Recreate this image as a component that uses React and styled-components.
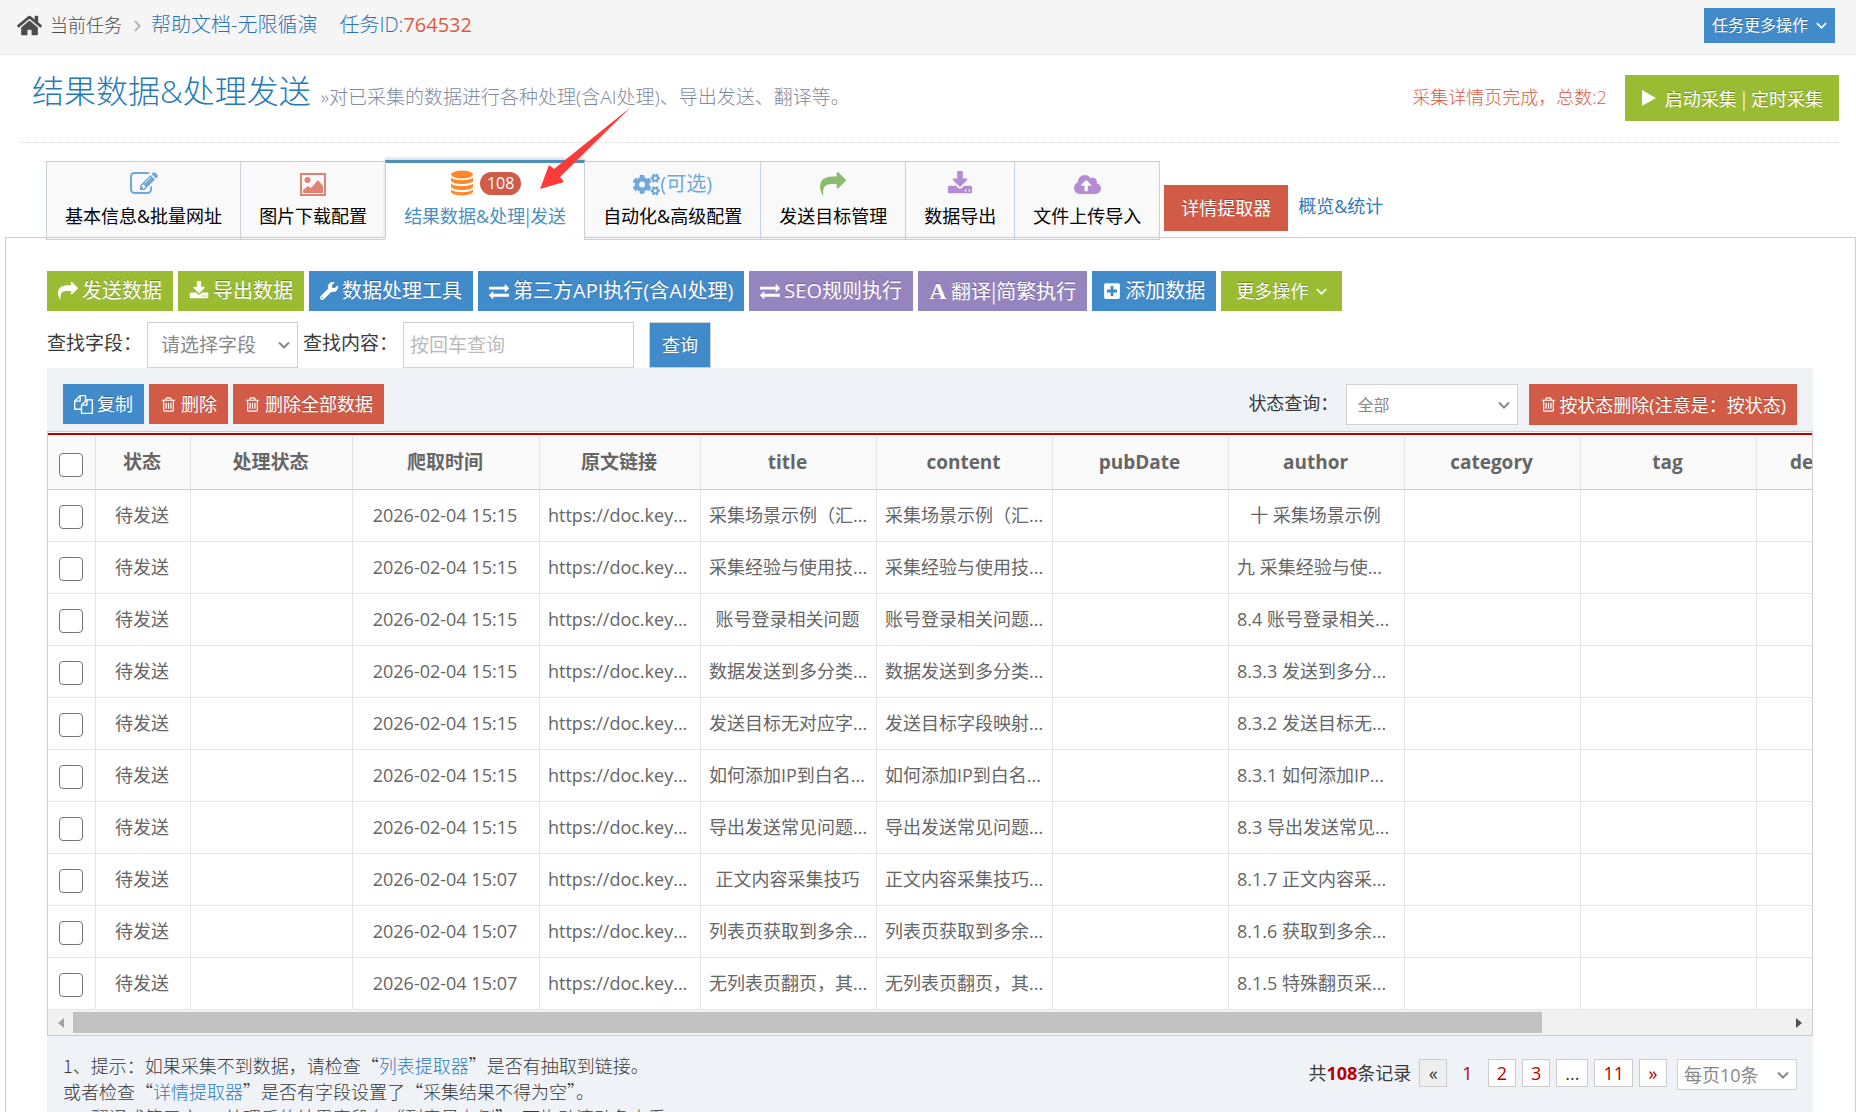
import React, { useState } from 'react';
import styled, { createGlobalStyle } from 'styled-components';
import { FaHome, FaWrench, FaPlusSquare, FaCogs, FaCloudUploadAlt } from 'react-icons/fa';

const GlobalStyle = createGlobalStyle`
    * {
        box-sizing: border-box;
    }

    body {
        margin: 0;
        background: #fff;
        color: #393939;
        font-family: "Open Sans", "Noto Sans CJK SC", sans-serif;
        font-size: 18px;
        line-height: 26px;
    }

    button, input, select {
        font-family: inherit;
        font-weight: inherit;
        margin: 0;
    }

    a {
        text-decoration: none;
    }
`;

const colors = {
    blue: "#428bca",
    green: "#9abc32",
    red: "#d15b47",
    purple: "#9585bf",
};

const Page = styled.div`
    position: relative;
    height: 100vh;
    overflow: hidden;
`;

/* ---------- icons ---------- */

const IconSvg = styled.svg`
    width: ${(p) => p.$size}px;
    height: ${(p) => p.$size}px;
    flex: none;
    fill: currentColor;
`;

const paths = {
    share: "M1792 640q0 26-19 45l-512 512q-19 19-45 19t-45-19-19-45v-256h-224q-98 0-175.5 6t-154 21.5-133 42.5-105.5 69.5-80 101-48.5 138.5-17.5 181q0 55 5 123 0 6 2.5 23.5t2.5 26.5q0 15-8.5 25t-23.5 10q-16 0-28-17-7-9-13-22t-13.5-30-10.5-24q-127-285-127-451 0-199 53-333 162-403 875-403h224v-256q0-26 19-45t45-19 45 19l512 512q19 19 19 45z",
    download: "M1344 1344q0-26-19-45t-45-19-45 19-19 45 19 45 45 19 45-19 19-45zm256 0q0-26-19-45t-45-19-45 19-19 45 19 45 45 19 45-19 19-45zm128-224v320q0 40-28 68t-68 28h-1472q-40 0-68-28t-28-68v-320q0-40 28-68t68-28h465l135 136q58 56 136 56t136-56l136-136h464q40 0 68 28t28 68zm-325-569q17 41-14 70l-448 448q-18 19-45 19t-45-19l-448-448q-31-29-14-70 17-39 59-39h256v-448q0-26 19-45t45-19h256q26 0 45 19t19 45v448h256q42 0 59 39z",
    exchange: "M1792 1184v192q0 13-9.5 22.5t-22.5 9.5h-1376v192q0 13-9.5 22.5t-22.5 9.5q-12 0-24-10l-319-320q-9-9-9-22 0-14 9-23l320-320q9-9 23-9 13 0 22.5 9.5t9.5 22.5v192h1376q13 0 22.5 9.5t9.5 22.5zm0-544q0 14-9 23l-320 320q-9 9-23 9-13 0-22.5-9.5t-9.5-22.5v-192h-1376q-13 0-22.5-9.5t-9.5-22.5v-192q0-13 9.5-22.5t22.5-9.5h1376v-192q0-14 9-23t23-9q12 0 24 10l319 319q9 9 9 23z",
    trash: "M704 736v576q0 14-9 23t-23 9h-64q-14 0-23-9t-9-23v-576q0-14 9-23t23-9h64q14 0 23 9t9 23zm256 0v576q0 14-9 23t-23 9h-64q-14 0-23-9t-9-23v-576q0-14 9-23t23-9h64q14 0 23 9t9 23zm256 0v576q0 14-9 23t-23 9h-64q-14 0-23-9t-9-23v-576q0-14 9-23t23-9h64q14 0 23 9t9 23zm128 724v-948h-896v948q0 22 7 40.5t14.5 27 10.5 8.5h832q3 0 10.5-8.5t14.5-27 7-40.5zm-672-1076h448l-48-117q-7-9-17-11h-317q-10 2-17 11zm928 32v64q0 14-9 23t-23 9h-96v948q0 83-47 143.5t-113 60.5h-832q-66 0-113-58.5t-47-141.5v-952h-96q-14 0-23-9t-9-23v-64q0-14 9-23t23-9h309l70-167q15-37 54-63t79-26h320q40 0 79 26t54 63l70 167h309q14 0 23 9t9 23z",
    files: "M1696 384q40 0 68 28t28 68v1216q0 40-28 68t-68 28h-960q-40 0-68-28t-28-68v-288h-544q-40 0-68-28t-28-68v-672q0-40 20-88t48-76l408-408q28-28 76-48t88-20h416q40 0 68 28t28 68v328q68-40 128-40h416zm-544 213l-299 299h299v-299zm-640-384l-299 299h299v-299zm196 647l316-316v-416h-384v416q0 40-28 68t-68 28h-416v640h512v-256q0-40 20-88t48-76zm956 804v-1152h-384v416q0 40-28 68t-68 28h-416v640h896z",
    edit: "M888 1184l116-116-152-152-116 116v56h96v96h56zm440-720q-16-16-33 1l-350 350q-17 17-1 33t33-1l350-350q17-17 1-33zm80 594v190q0 119-84.5 203.5t-203.5 84.5h-832q-119 0-203.5-84.5t-84.5-203.5v-832q0-119 84.5-203.5t203.5-84.5h832q63 0 117 25 15 7 18 23 3 17-9 29l-49 49q-14 14-32 8-23-6-45-6h-832q-66 0-113 47t-47 113v832q0 66 47 113t113 47h832q66 0 113-47t47-113v-126q0-13 9-22l64-64q15-15 35-7t20 29zm-96-738l288 288-672 672h-288v-288zm444 132l-92 92-288-288 92-92q28-28 68-28t68 28l152 152q28 28 28 68t-28 68z",
};

const Icon = ({ name, size }) => (
    <IconSvg $size={size} viewBox="0 0 1792 1792" aria-hidden="true">
        <path d={paths[name]} />
    </IconSvg>
);

const ImageIcon = () => (
    <IconSvg $size={26} viewBox="0 0 26 26" aria-hidden="true">
        <path fillRule="evenodd" d="M0 2h26v23H0zM2 4v19h22V4z" />
        <circle cx="7.5" cy="9" r="3" />
        <path d="M3 22v-3l5-4 3 2 7-8 5 6v7z" />
    </IconSvg>
);

const DatabaseIcon = () => (
    <IconSvg $size={26} viewBox="0 0 26 26" aria-hidden="true">
        <ellipse cx="13" cy="4.500" rx="11" ry="4" />
        <path d="M2 7.500c3 3.500 19 3.500 22 0v3.500c-2 4-20 4-22 0z" />
        <path d="M2 13.500c3 3.500 19 3.500 22 0v3.500c-2 4-20 4-22 0z" />
        <path d="M2 19.500c3 3.500 19 3.500 22 0v2.500c-2 4.500-20 4.500-22 0z" />
    </IconSvg>
);

const PlayIcon = () => (
    <IconSvg $size={16} viewBox="0 0 16 16" aria-hidden="true">
        <path d="M1 0l14 8-14 8z" />
    </IconSvg>
);

const LineSvg = styled.svg`
    width: ${(p) => p.$size}px;
    height: ${(p) => p.$size}px;
    flex: none;
    fill: none;
    stroke: currentColor;
    stroke-width: 2;
`;

const ChevronDown = ({ size }) => (
    <LineSvg $size={size} viewBox="0 0 12 12" aria-hidden="true">
        <path d="M1 3.500l5 5 5-5" />
    </LineSvg>
);

const ChevronRight = () => (
    <LineSvg $size={12} viewBox="0 0 12 12" aria-hidden="true">
        <path d="M4 1l4.500 5L4 11" />
    </LineSvg>
);

const LetterIcon = styled.span`
    width: 18px;
    font-family: "Liberation Serif", serif;
    font-size: 24px;
    font-weight: 700;
`;

/* ---------- shared controls ---------- */

const Button = styled.button`
    display: inline-flex;
    align-items: center;
    justify-content: center;
    gap: ${(p) => p.$gap || 4}px;
    height: ${(p) => p.$height || 40}px;
    padding: 0 ${(p) => p.$pad || 11}px;
    border: 0;
    background: ${(p) => colors[p.$color]};
    color: #fff;
    font-size: ${(p) => p.$size || 18}px;
    line-height: 26px;
    white-space: nowrap;
    text-shadow: 0 -1px 0 rgba(0, 0, 0, 0.25);
    cursor: pointer;
`;

// the latin bar is too wide next to hanzi
const Bar = styled.span`
    font-family: "Noto Sans CJK SC", sans-serif;
`;

const SelectBox = styled.div`
    position: relative;
    width: ${(p) => p.$width}px;
    height: ${(p) => p.$height}px;
    color: #888;

    select {
        appearance: none;
        width: 100%;
        height: 100%;
        padding: 0 ${(p) => p.$pad}px;
        border: 1px solid #d0d0d0;
        border-radius: 0;
        background: #fff;
        color: inherit;
        font-size: ${(p) => p.$size}px;
    }

    svg {
        position: absolute;
        right: 8px;
        top: 50%;
        margin-top: -6px;
        pointer-events: none;
    }
`;

const Select = ({ id, label, options, ...rest }) => (
    <SelectBox {...rest}>
        <select id={id} aria-label={label}>
            {options.map((o) => <option key={o}>{o}</option>)}
        </select>
        <ChevronDown size={12} />
    </SelectBox>
);

/* ---------- top ---------- */

const TopBar = styled.nav`
    display: flex;
    align-items: center;
    height: 55px;
    padding: 0 21px 4px 17px;
    background: #f5f5f5;
    border-bottom: 1px solid #e5e5e5;
`;

const HomeLink = styled.a`
    display: flex;
    align-items: center;
    gap: 8px;
    color: #4c4c4c;
    font-weight: 300;
`;

const Separator = styled.span`
    display: flex;
    margin: 2px 8px 0 9px;
    color: #b2b6bf;
`;

const TaskName = styled.a`
    margin-right: 22px;
    color: #2a72b5;
    font-size: 20px;
    font-weight: 300;
`;

const TaskId = styled.span`
    color: #2a72b5;
    font-size: 20px;
    font-weight: 300;

    b {
        color: #dd5a43;
        font-weight: 400;
    }
`;

const Spacer = styled.div`
    flex: 1;
`;

const Header = styled.header`
    display: flex;
    align-items: center;
    margin: 0 17px 0 21px;
    padding: 20px 0 21px 11px;
    border-bottom: 1px dotted #d9d9d9;
`;

const Title = styled.h1`
    margin: 0 10px 0 0;
    padding-bottom: 14px;
    color: #2679b5;
    font-size: 32px;
    line-height: 32px;
    font-weight: 300;
`;

const Subtitle = styled.span`
    flex: 1;
    padding-bottom: 3px;
    color: #8089a0;
    font-size: 19px;
    font-weight: 300;
`;

const StatusText = styled.span`
    margin-right: 18px;
    padding-bottom: 3px;
    color: #dd5a43;
    font-weight: 300;
`;

/* ---------- tabs ---------- */

const TabRow = styled.div`
    position: relative;
    z-index: 1;
    display: flex;
    align-items: flex-end;
    margin: 17px 0 -3px 46px;
`;

const Tab = styled.button`
    display: flex;
    flex-direction: column;
    align-items: center;
    height: ${(p) => (p.$active ? 80 : 79)}px;
    padding: ${(p) => (p.$active ? 4 : 6)}px 18px 0;
    border: 1px solid #c5d0dc;
    border-top: ${(p) => (p.$active ? "3px solid #4c8fbd" : "1px solid #c5d0dc")};
    border-bottom: ${(p) => (p.$active ? "3px solid #fff" : "3px double #c5d0dc")};
    margin-right: -1px;
    background: ${(p) => (p.$active ? "#fff" : "#f9f9f9")};
    box-shadow: ${(p) => (p.$active ? "0 -2px 3px rgba(0, 0, 0, 0.15)" : "none")};
    color: ${(p) => (p.$active ? "#4c8fbd" : "#000")};
    font-size: 18px;
    line-height: 32px;
    white-space: nowrap;
    cursor: pointer;
`;

const TabIcon = styled.span`
    display: flex;
    align-items: center;
    height: 32px;
    color: ${(p) => p.$color};
    font-size: 20px;
`;

const Badge = styled.span`
    margin-left: 5px;
    padding: 0 7px;
    border-radius: 12px;
    background: ${colors.red};
    color: #fff;
    font-size: 16px;
    line-height: 23px;
`;

const ExtractorSlot = styled.div`
    display: flex;
    margin: 0 10px 9px 5px;
`;

const StatsLink = styled.a`
    margin-bottom: 21px;
    color: #337ab7;
`;

/* ---------- panel ---------- */

const Panel = styled.main`
    margin-left: 5px;
    padding: 33px 42px 0 41px;
    border: 1px solid #c5d0dc;
    border-bottom: 0;
`;

const Toolbar = styled.div`
    display: flex;
    gap: 5px;
`;

const SearchRow = styled.div`
    display: flex;
    align-items: center;
    margin-top: 11px;
    font-size: 19px;

    label {
        width: 100px;
        padding-bottom: 4px;
    }

    label:nth-of-type(2) {
        margin-left: 5px;
    }
`;

const SearchInput = styled.input`
    width: 231px;
    height: 46px;
    margin-right: 15px;
    padding: 0 6px;
    border: 1px solid #d0d0d0;
    font-size: 19px;

    &::placeholder {
        color: #bababa;
    }
`;

const QueryButton = styled(Button)`
    border: 1px solid #d0d0d0;
`;

const GridBox = styled.section`
    background: #eff3f8;
`;

const GridTools = styled.div`
    display: flex;
    align-items: flex-start;
    gap: 5px;
    padding: 16px 16px 6px;

    label {
        margin-right: 3px;
        padding-top: 6px;
    }
`;

const DeleteSlot = styled.div`
    display: flex;
    margin-left: 6px;
`;

const TableFrame = styled.div`
    border: 1px solid #ccc;
    background: #fff;
`;

const TableClip = styled.div`
    overflow: hidden;
    margin-top: 1px;
    border-top: 2px solid #b80000;
`;

const Table = styled.table`
    width: 2084px;
    table-layout: fixed;
    border-collapse: separate;
    border-spacing: 0;
    color: #666;
    font-size: 18px;
`;

const HeadCell = styled.th`
    height: 55px;
    padding: 0 5px 0 3px;
    border-right: 1px solid #e1e6eb;
    border-bottom: 1px solid #ccc;
    background: #fafafa;
    font-size: 19px;
    font-weight: 700;
    text-align: center;
    white-space: nowrap;
`;

const Cell = styled.td`
    height: 52px;
    padding: 0 ${(p) => (p.$long ? "0 2px 8px" : "5px 2px 3px")};
    border-right: 1px solid #e1e6eb;
    border-bottom: 1px solid #e1e6eb;
    text-align: ${(p) => (p.$long ? "left" : "center")};
    white-space: nowrap;
    overflow: hidden;
`;

const CheckBox = styled.input`
    appearance: none;
    display: block;
    width: 24px;
    height: 24px;
    margin: 5px auto 0;
    border: 1px solid #767676;
    border-radius: 4px;
    background: #fff;

    &:checked {
        background: ${colors.blue};
    }
`;

const ScrollTrack = styled.div`
    display: grid;
    grid-template-columns: 25px 6fr 1fr 25px;
    align-items: center;
    height: 25px;
    background: #f1f1f1;
`;

const ScrollThumb = styled.div`
    height: 21px;
    background: #c1c1c1;
`;

const ScrollArrow = styled.span`
    grid-column: ${(p) => (p.$left ? 1 : 4)};
    justify-self: center;
    border: 5px solid transparent;
    border-left: ${(p) => (p.$left ? "0" : "6px solid #505050")};
    border-right: ${(p) => (p.$left ? "6px solid #a3a3a3" : "0")};
`;

const Footer = styled.footer`
    display: flex;
    justify-content: space-between;
    align-items: flex-start;
    padding: 16px 16px 30px;
`;

const Tips = styled.p`
    margin: 0;
    font-family: "Noto Sans CJK SC", sans-serif;
    font-weight: 300;

    a {
        color: #337ab7;
    }
`;

const Pager = styled.div`
    display: flex;
    align-items: flex-start;
    gap: 6px;
    margin-top: 7px;
    line-height: 28px;

    b {
        color: #b80000;
    }
`;

const Total = styled.span`
    margin-right: 2px;
`;

const PageSize = styled.div`
    margin-left: 4px;
`;

const PageButton = styled.button`
    height: 28px;
    min-width: 28px;
    padding: 0 8px;
    border: 1px solid ${(p) => (p.$current ? "transparent" : "#ccc")};
    background: ${(p) => (p.$disabled ? "#efefef" : p.$current ? "transparent" : "#fff")};
    color: ${(p) => (p.$disabled || p.$plain ? "#393939" : "#b80000")};
    font-size: 18px;
    line-height: 24px;
`;

const Pointer = styled.svg`
    position: absolute;
    left: 540px;
    top: 107px;
    z-index: 2;
    width: 92px;
    height: 83px;
    pointer-events: none;
`;

const columns = [
    { name: "状态", width: 95 },
    { name: "处理状态", width: 162 },
    { name: "爬取时间", width: 187 },
    { name: "原文链接", width: 161 },
    { name: "title", width: 176 },
    { name: "content", width: 176 },
    { name: "pubDate", width: 176 },
    { name: "author", width: 176 },
    { name: "category", width: 176 },
    { name: "tag", width: 176 },
    { name: "description", width: 176 },
    { name: "keywords", width: 199 },
];

const rows = [
    ["15:15", "采集场景示例（汇...", "采集场景示例（汇...", "十 采集场景示例"],
    ["15:15", "采集经验与使用技...", "采集经验与使用技...", "九 采集经验与使..."],
    ["15:15", "账号登录相关问题", "账号登录相关问题...", "8.4 账号登录相关..."],
    ["15:15", "数据发送到多分类...", "数据发送到多分类...", "8.3.3 发送到多分..."],
    ["15:15", "发送目标无对应字...", "发送目标字段映射...", "8.3.2 发送目标无..."],
    ["15:15", "如何添加IP到白名...", "如何添加IP到白名...", "8.3.1 如何添加IP..."],
    ["15:15", "导出发送常见问题...", "导出发送常见问题...", "8.3 导出发送常见..."],
    ["15:07", "正文内容采集技巧", "正文内容采集技巧...", "8.1.7 正文内容采..."],
    ["15:07", "列表页获取到多余...", "列表页获取到多余...", "8.1.6 获取到多余..."],
    ["15:07", "无列表页翻页，其...", "无列表页翻页，其...", "8.1.5 特殊翻页采..."],
];

const tabs = [
    { id: "base", name: "基本信息&批量网址", color: "#6fa8dc", icon: <Icon name="edit" size={28} /> },
    { id: "image", name: "图片下载配置", color: "#e08374", icon: <ImageIcon /> },
    { id: "result", name: <>结果数据&处理<Bar>|</Bar>发送</>, color: "#ff892a", icon: <><DatabaseIcon /><Badge>108</Badge></> },
    { id: "auto", name: "自动化&高级配置", color: "#6fa8dc", icon: <><FaCogs size={27} />(可选)</> },
    { id: "target", name: "发送目标管理", color: "#8abb6f", icon: <Icon name="share" size={26} /> },
    { id: "export", name: "数据导出", color: "#b58cd3", icon: <Icon name="download" size={26} /> },
    { id: "upload", name: "文件上传导入", color: "#b58cd3", icon: <FaCloudUploadAlt size={27} /> },
];

// text that was cut short starts at the left edge of its cell
const TextCell = ({ text }) => (
    <Cell $long={text.endsWith("...")}>{text}</Cell>
);

const DataTable = () => {
    const [checked, setChecked] = useState({});

    const toggle = (i) => setChecked({ ...checked, [i]: !checked[i] });
    const toggleAll = (e) => setChecked(Object.fromEntries(rows.map((r, i) => [i, e.target.checked])));

    return (
        <Table>
            <colgroup>
                <col width="48" />
                {columns.map((c) => <col key={c.name} width={c.width} />)}
            </colgroup>
            <thead>
                <tr>
                    <HeadCell><CheckBox type="checkbox" aria-label="全选" onChange={toggleAll} /></HeadCell>
                    {columns.map((c) => <HeadCell key={c.name}>{c.name}</HeadCell>)}
                </tr>
            </thead>
            <tbody>
                {rows.map(([time, title, content, author], i) => (
                    <tr key={i}>
                        <Cell>
                            <CheckBox
                                type="checkbox"
                                aria-label={title}
                                checked={!!checked[i]}
                                onChange={() => toggle(i)} />
                        </Cell>
                        <Cell>待发送</Cell>
                        <Cell />
                        <Cell>2026-02-04 {time}</Cell>
                        <TextCell text="https://doc.key..." />
                        <TextCell text={title} />
                        <TextCell text={content} />
                        <Cell />
                        <TextCell text={author} />
                        <Cell />
                        <Cell />
                        <Cell />
                        <Cell />
                    </tr>
                ))}
            </tbody>
        </Table>
    );
}

const App = () => {
    const [active, setActive] = useState("result");

    return (
        <Page>
            <GlobalStyle />
            <TopBar>
                <HomeLink href="#"><FaHome size={25} />当前任务</HomeLink>
                <Separator><ChevronRight /></Separator>
                <TaskName href="#">帮助文档-无限循演</TaskName>
                <TaskId>任务ID:<b>764532</b></TaskId>
                <Spacer />
                <Button $color="blue" $height={35} $pad={8} $gap={8} $size={16}>
                    任务更多操作<ChevronDown size={11} />
                </Button>
            </TopBar>

            <Header>
                <Title>结果数据&处理发送</Title>
                <Subtitle>»对已采集的数据进行各种处理(含AI处理)、导出发送、翻译等。</Subtitle>
                <StatusText>采集详情页完成，总数:2</StatusText>
                <Button $color="green" $height={46} $pad={16} $gap={8}>
                    <PlayIcon /><span>启动采集 <Bar>|</Bar> 定时采集</span>
                </Button>
            </Header>

            <TabRow>
                {tabs.map((t) => (
                    <Tab key={t.id} $active={t.id === active} onClick={() => setActive(t.id)}>
                        <TabIcon $color={t.color}>{t.icon}</TabIcon>
                        <span>{t.name}</span>
                    </Tab>
                ))}
                <ExtractorSlot>
                    <Button $color="red" $height={46} $pad={17}>详情提取器</Button>
                </ExtractorSlot>
                <StatsLink href="#">概览&统计</StatsLink>
            </TabRow>

            <Panel>
                <Toolbar>
                    <Button $color="green" $size={20}><Icon name="share" size={20} />发送数据</Button>
                    <Button $color="green" $size={20}><Icon name="download" size={20} />导出数据</Button>
                    <Button $color="blue" $size={20}><FaWrench size={18} />数据处理工具</Button>
                    <Button $color="blue" $size={20}><Icon name="exchange" size={20} />第三方API执行(含AI处理)</Button>
                    <Button $color="purple" $size={20}><Icon name="exchange" size={20} />SEO规则执行</Button>
                    <Button $color="purple" $size={20}><LetterIcon aria-hidden="true">A</LetterIcon><span>翻译<Bar>|</Bar>简繁执行</span></Button>
                    <Button $color="blue" $size={20}><FaPlusSquare size={18} />添加数据</Button>
                    <Button $color="green" $pad={15} $gap={8}>更多操作<ChevronDown size={11} /></Button>
                </Toolbar>

                <SearchRow>
                    <label htmlFor="field">查找字段：</label>
                    <Select id="field" options={["请选择字段"]} $width={151} $height={46} $size={19} $pad={13} />
                    <label htmlFor="keyword">查找内容：</label>
                    <SearchInput id="keyword" placeholder="按回车查询" />
                    <QueryButton $color="blue" $height={46} $pad={12}>查询</QueryButton>
                </SearchRow>

                <GridBox>
                    <GridTools>
                        <Button $color="blue"><Icon name="files" size={19} />复制</Button>
                        <Button $color="red"><Icon name="trash" size={17} />删除</Button>
                        <Button $color="red"><Icon name="trash" size={17} />删除全部数据</Button>
                        <Spacer />
                        <label htmlFor="state">状态查询：</label>
                        <Select id="state" options={["全部"]} $width={172} $height={41} $size={16} $pad={10} />
                        <DeleteSlot>
                            <Button $color="red" $height={41} $gap={2}><Icon name="trash" size={17} />按状态删除(注意是：按状态)</Button>
                        </DeleteSlot>
                    </GridTools>

                    <TableFrame>
                        <TableClip>
                            <DataTable />
                        </TableClip>
                        <ScrollTrack>
                            <ScrollArrow $left />
                            <ScrollThumb />
                            <ScrollArrow />
                        </ScrollTrack>
                    </TableFrame>

                    <Footer>
                        <Tips>
                            1、提示：如果采集不到数据，请检查“<a href="#">列表提取器</a>”是否有抽取到链接。<br />
                            或者检查“<a href="#">详情提取器</a>”是否有字段设置了“采集结果不得为空”。<br />
                            2、翻译或第三方API处理后的结果字段在“列表最右侧”，可拖动滚动条查看
                        </Tips>
                        <Pager>
                            <Total>共<b>108</b>条记录</Total>
                            <PageButton $disabled>«</PageButton>
                            <PageButton $current>1</PageButton>
                            <PageButton>2</PageButton>
                            <PageButton>3</PageButton>
                            <PageButton $plain>...</PageButton>
                            <PageButton>11</PageButton>
                            <PageButton>»</PageButton>
                            <PageSize>
                                <Select label="每页条数" options={["每页10条"]} $width={120} $height={31} $size={18} $pad={6} />
                            </PageSize>
                        </Pager>
                    </Footer>
                </GridBox>
            </Panel>

            <Pointer viewBox="0 0 92 83" aria-hidden="true">
                <path fill="#fb3b3a" d="M0 82l9-24 5 4L91 0 20 70l4 5z" />
            </Pointer>
        </Page>
    );
}

export default App;
